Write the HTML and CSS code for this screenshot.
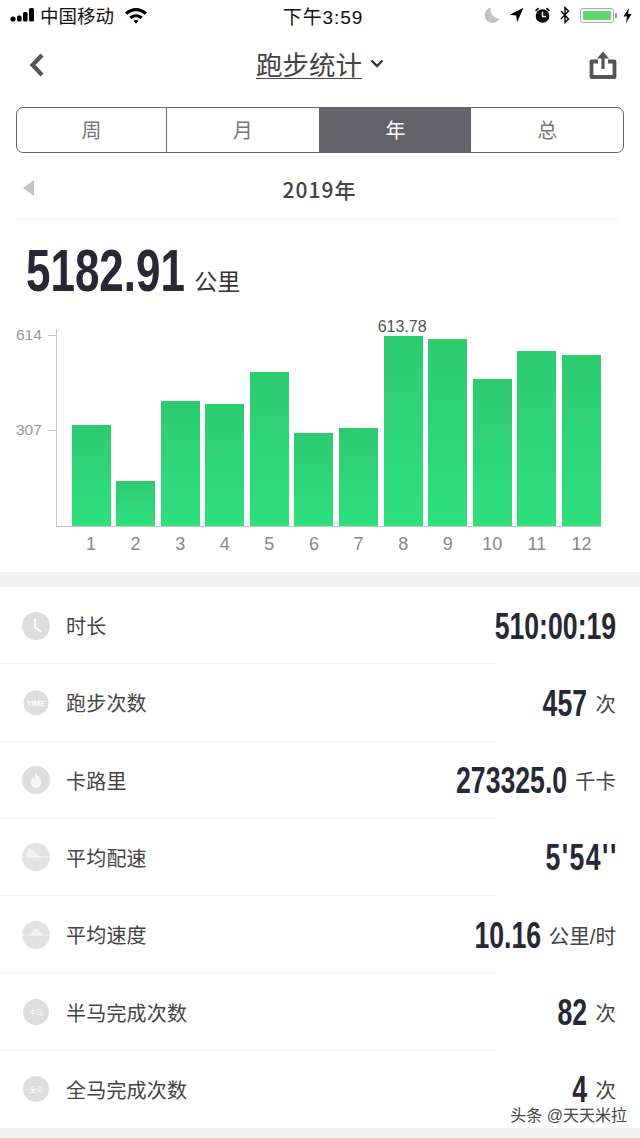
FILE: index.html
```html
<!DOCTYPE html>
<html lang="zh-CN">
<head>
    <meta charset="UTF-8">
    <meta name="viewport" content="width=device-width, initial-scale=1.0">
    <title>跑步统计</title>
    <link rel="stylesheet" href="styles.css">
</head>
<body>
    <div class="page">
        <div class="status-bar">
            <div class="status-left">
                <svg class="signal" width="26" height="16" viewBox="0 0 26 16"><circle cx="3" cy="12" r="2.6"/><rect x="7" y="8.5" width="4.6" height="6" rx="1.6"/><rect x="13" y="5" width="4.6" height="9.6" rx="1.6"/><rect x="19" y="1" width="5" height="13.6" rx="1.6"/></svg>
                <span>中国移动</span>
                <svg class="wifi" width="24" height="17" viewBox="0 0 24 17"><path d="M1 5.6C7.5-.4 16.500-.4 23 5.600l-2.100 2.200C15.700 3 8.300 3 3.100 7.800z"/><path d="M5.200 9.800c4-3.500 9.600-3.500 13.600 0l-2.200 2.200c-2.800-2.300-6.400-2.300-9.200 0z"/><path d="M9.300 13.800c1.600-1.200 3.800-1.200 5.400 0L12 16.600z"/></svg>
            </div>
            <div class="status-time">下午3:59</div>
            <div class="status-right">
                <svg class="icon-moon" width="16" height="18" viewBox="0 0 16 18"><path d="M7 1.500a7.800 7.800 0 1 0 8.500 11A8.500 8.500 0 0 1 7 1.500z" fill="#c2c2c2"/></svg>
                <svg class="icon-arrow" width="15" height="16" viewBox="0 0 15 16"><path d="M14.500.8L.8 7.800l6.400.6.900 6.800z"/></svg>
                <svg class="icon-alarm" width="17" height="18" viewBox="0 0 17 18"><circle cx="8.500" cy="10" r="6.800"/><path d="M1 4.200L4 1.500 5.200 2.700 2.200 5.400zM16 4.200L13 1.500 11.800 2.700 14.800 5.400z"/><path d="M8.500 5.500V10.500H12" fill="none" stroke="#fff" stroke-width="1.400"/></svg>
                <svg width="10" height="18" viewBox="0 0 10 18"><path d="M1 5l7.500 8L5 16.500V1.500L8.500 5 1 13" fill="none" stroke="#000" stroke-width="1.400"/></svg>
                <div class="battery"><div class="battery-fill"></div></div>
                <div class="battery-cap"></div>
                <svg width="9" height="15" viewBox="0 0 9 15"><path d="M6 0L.5 8.500H4L3 15l5.500-9H5z"/></svg>
            </div>
        </div>

        <div class="nav">
            <svg class="nav-back" width="18" height="26" viewBox="0 0 18 26"><path d="M14 3L4.500 13 14 23" fill="none" stroke="#555" stroke-width="4.200"/></svg>
            <div class="nav-title"><span class="nav-title-text">跑步统计</span>
                <svg width="14" height="9" viewBox="0 0 14 9"><path d="M1.500 1.500L7 7l5.500-5.500" fill="none" stroke="#333" stroke-width="2.400"/></svg>
            </div>
            <svg class="nav-share" width="28" height="30" viewBox="0 0 28 30"><path d="M9 11.500H2.500v15.500h23V11.500H19" fill="none" stroke="#555" stroke-width="3.800" stroke-linejoin="round"/><path d="M14 19V4" stroke="#555" stroke-width="3.200"/><path d="M8 8.500L14 1.500 20 8.500z" fill="#555"/></svg>
        </div>

        <div class="tabs">
            <div class="tab">周</div>
            <div class="tab">月</div>
            <div class="tab tab-active">年</div>
            <div class="tab">总</div>
        </div>

        <div class="year-row">
            <div class="year-prev"></div>
            <div class="year-label">2019年</div>
        </div>

        <div class="total">
            <span class="num num-big">5182.91</span>
            <span class="total-unit">公里</span>
        </div>

        <div class="chart">
            <div class="tick tick-top">614</div>
            <div class="tick tick-mid">307</div>
            <div class="bars">
                <div class="bar" style="height: 101px"></div>
                <div class="bar" style="height: 45px"></div>
                <div class="bar" style="height: 125px"></div>
                <div class="bar" style="height: 122px"></div>
                <div class="bar" style="height: 154px"></div>
                <div class="bar" style="height: 93px"></div>
                <div class="bar" style="height: 98px"></div>
                <div class="bar" style="height: 190px"><span class="bar-value">613.78</span></div>
                <div class="bar" style="height: 187px"></div>
                <div class="bar" style="height: 147px"></div>
                <div class="bar" style="height: 175px"></div>
                <div class="bar" style="height: 171px"></div>
            </div>
            <div class="months">
                <span>1</span><span>2</span><span>3</span><span>4</span><span>5</span><span>6</span>
                <span>7</span><span>8</span><span>9</span><span>10</span><span>11</span><span>12</span>
            </div>
        </div>

        <div class="band"></div>

        <div class="rows">
            <div class="row">
                <svg class="row-icon" width="28" height="28" viewBox="0 0 28 28"><circle cx="14" cy="14" r="14" fill="#dedede"/><path d="M13 7v8l6 5" fill="none" stroke="#fff" stroke-width="2"/></svg>
                <div class="row-label">时长</div>
                <div class="row-value"><span class="num">510:00:19</span></div>
            </div>
            <div class="row">
                <svg class="row-icon" width="28" height="28" viewBox="0 0 28 28"><circle cx="14" cy="14" r="12.500" fill="#dedede"/><text x="14" y="17" class="icon-text icon-text-bold">TIME</text></svg>
                <div class="row-label">跑步次数</div>
                <div class="row-value"><span class="num">457</span><span class="unit">次</span></div>
            </div>
            <div class="row">
                <svg class="row-icon" width="28" height="28" viewBox="0 0 28 28"><circle cx="14" cy="14" r="14" fill="#dedede"/><path d="M14 6c1 3.500 5.500 5.500 5.500 10.500a5.500 5.500 0 0 1-11 0c0-2.500 1.200-4 2.500-5.200.2 1.700.8 2.400 1.500 2.500C13 11 12.500 9 14 6z" fill="#f4f4f4"/></svg>
                <div class="row-label">卡路里</div>
                <div class="row-value"><span class="num">273325.0</span><span class="unit">千卡</span></div>
            </div>
            <div class="row">
                <svg class="row-icon" width="28" height="28" viewBox="0 0 28 28"><circle cx="14" cy="14" r="14" fill="#e2e2e2"/><path d="M7 5l5 3 6 6H4z" fill="#f1f1f1"/><path d="M0 14h28" stroke="#fff" stroke-width="1" stroke-dasharray="2 1"/></svg>
                <div class="row-label">平均配速</div>
                <div class="row-value"><span class="num num-pace">5'54''</span></div>
            </div>
            <div class="row">
                <svg class="row-icon" width="28" height="28" viewBox="0 0 28 28"><circle cx="14" cy="14" r="14" fill="#e2e2e2"/><path d="M7 14l7-7 7 7z" fill="#f1f1f1"/><path d="M0 14h28" stroke="#fff" stroke-width="1" stroke-dasharray="2 1"/></svg>
                <div class="row-label">平均速度</div>
                <div class="row-value"><span class="num">10.16</span><span class="unit">公里/时</span></div>
            </div>
            <div class="row">
                <svg class="row-icon" width="28" height="28" viewBox="0 0 28 28"><circle cx="14" cy="14" r="13" fill="#dedede"/><text x="14" y="17" class="icon-text">半马</text></svg>
                <div class="row-label">半马完成次数</div>
                <div class="row-value"><span class="num">82</span><span class="unit">次</span></div>
            </div>
            <div class="row">
                <svg class="row-icon" width="28" height="28" viewBox="0 0 28 28"><circle cx="14" cy="14" r="13" fill="#dedede"/><text x="14" y="17" class="icon-text">全马</text></svg>
                <div class="row-label">全马完成次数</div>
                <div class="row-value"><span class="num">4</span><span class="unit">次</span></div>
            </div>
        </div>

        <div class="band-bottom"></div>
        <div class="watermark">头条 @天天米拉</div>
    </div>
</body>
</html>
```

FILE: styles.css
```css
body {
    margin: 0;
    background-color: #fff;
    font-family: "Liberation Sans", "Noto Sans CJK SC", sans-serif;
    color: #333;
}
.page {
    position: relative;
    width: 640px;
    height: 1138px;
    overflow: hidden;
    display: flex;
    flex-direction: column;
}

/* status bar */
.status-bar {
    height: 33px;
    padding: 0 8px 3px 10px;
    box-sizing: border-box;
    display: flex;
    align-items: center;
    position: relative;
    color: #111;
}
.status-left {
    display: flex;
    align-items: center;
    gap: 4px;
    font-size: 18.500px;
}
.wifi {
    margin-left: 6px;
}
.status-time {
    position: absolute;
    left: 0;
    right: 0;
    text-align: center;
    font-size: 19px;
    letter-spacing: 0.9px;
    padding-left: 6px;
}
.status-right {
    margin-left: auto;
    display: flex;
    align-items: center;
    gap: 6px;
}
.icon-moon {
    margin-right: 3px;
}
.icon-arrow {
    margin-right: 4px;
}
.icon-alarm {
    margin-right: 3px;
}
.battery {
    width: 34px;
    height: 15px;
    padding: 2px;
    margin-left: 4px;
    border: 1px solid #aaa;
    border-radius: 3px;
    box-sizing: border-box;
    display: flex;
}
.battery-fill {
    flex: 1;
    background-color: #5cd86f;
    border-radius: 1px;
}
.battery-cap {
    width: 2px;
    height: 5px;
    margin-left: -5px;
    background-color: #999;
}

/* nav */
.nav {
    height: 64px;
    position: relative;
    display: flex;
    align-items: center;
    justify-content: center;
}
.nav-back {
    position: absolute;
    left: 28px;
    top: 19px;
}
.nav-share {
    position: absolute;
    right: 23px;
    top: 17px;
}
.nav-title {
    display: flex;
    align-items: center;
    gap: 8px;
    padding-bottom: 3px;
    font-size: 26.500px;
    color: #444;
}
.nav-title-text {
    text-decoration: underline;
    text-decoration-thickness: 1px;
    text-underline-offset: 3px;
}

/* tabs */
.tabs {
    margin: 10px 16px 0;
    height: 46px;
    display: flex;
    border: 1.500px solid #666;
    border-radius: 7px;
    box-sizing: border-box;
    overflow: hidden;
}
.tab {
    flex: 1;
    display: flex;
    align-items: center;
    justify-content: center;
    padding-bottom: 2px;
    font-size: 20px;
    color: #777;
    border-right: 1px solid #666;
}
.tab:first-child {
    flex: none;
    width: 149px;
}
.tab:last-child,
.tab-active {
    border-right: none;
}
.tab-active {
    background-color: #636369;
    color: #fff;
}

/* year */
.year-row {
    margin: 0 20px 0 16px;
    height: 67px;
    display: flex;
    align-items: center;
    justify-content: center;
    position: relative;
    border-bottom: 1px solid #f3f3f3;
    box-sizing: border-box;
}
.year-prev {
    position: absolute;
    left: 7px;
    top: 27px;
    border-style: solid;
    border-width: 8px 11px 8px 0;
    border-color: transparent #c4c4c4 transparent transparent;
}
.year-label {
    font-family: "Noto Sans CJK SC", sans-serif;
    font-size: 21px;
    font-weight: 500;
    letter-spacing: 1px;
    line-height: 28px;
    color: #444;
    padding: 0 0 0 3px;
    margin-top: 6px;
}

/* total */
.num {
    display: inline-block;
    font-weight: bold;
    font-size: 36px;
    line-height: 30px;
    color: #272735;
    transform: scaleX(0.74);
    transform-origin: right center;
}
.total {
    height: 102px;
    padding: 0 0 0 26px;
    display: flex;
    align-items: center;
    box-sizing: border-box;
}
.num-big {
    font-size: 59px;
    line-height: 70px;
    transform: scaleX(0.745);
    transform-origin: left center;
    margin-right: -54px;
}
.total-unit {
    font-size: 23px;
    margin-left: 9px;
    margin-top: 18px;
    color: #333;
}

/* chart */
.chart {
    position: relative;
    height: 243px;
    padding-left: 56px;
    margin-top: 7px;
}
.bars {
    height: 198px;
    width: 546px;
    padding-left: 14.500px;
    box-sizing: border-box;
    display: flex;
    align-items: flex-end;
    gap: 5.600px;
    border-left: 1px solid #c8c8c8;
    border-bottom: 1px solid #c8c8c8;
}
.bar {
    position: relative;
    width: 39px;
    flex: none;
    background: linear-gradient(#2ecb70, #2edf7c);
}
.bar-value {
    position: absolute;
    left: -6px;
    top: -18px;
    font-size: 16px;
    line-height: 18px;
    color: #555;
}
.tick {
    position: absolute;
    left: 16px;
    width: 40px;
    font-size: 15.500px;
    line-height: 18px;
    color: #999;
    display: flex;
    align-items: center;
    gap: 6px;
}
.tick::after {
    content: "";
    flex: 1;
    height: 1px;
    background-color: #c8c8c8;
}
.tick-top {
    top: -3px;
}
.tick-mid {
    top: 92px;
}
.months {
    margin-left: 15.500px;
    display: flex;
    gap: 5.600px;
    padding-top: 6px;
    font-size: 18px;
    line-height: 22px;
    color: #888;
}
.months span {
    width: 39px;
    flex: none;
    text-align: center;
}

.band {
    height: 15px;
    background-color: #f0f0f0;
    flex: none;
}

/* data rows */
.rows {
    height: 541px;
    flex: none;
    display: flex;
    flex-direction: column;
}
.row {
    flex: 1;
    position: relative;
    display: flex;
    align-items: center;
    padding: 0 24px 0 22px;
}
.row:not(:last-child)::after {
    content: "";
    position: absolute;
    left: 0;
    bottom: 0;
    width: 495px;
    height: 1px;
    background-color: #f3f3f3;
}
.row-icon {
    flex: none;
}
.row-label {
    margin-left: 16px;
    font-size: 20px;
    letter-spacing: 0.2px;
    color: #444;
}
.row-value {
    margin-left: auto;
    display: flex;
    align-items: center;
}
.row-value .num {
    margin-top: 2px;
}
.row-value .num-pace {
    letter-spacing: 2px;
    margin-right: -2px;
}
.unit {
    margin-left: 8px;
    font-size: 20.500px;
    color: #444;
}
.icon-text {
    font-size: 7px;
    fill: #fff;
    text-anchor: middle;
}
.icon-text-bold {
    font-size: 8px;
    font-weight: bold;
}

.band-bottom {
    flex: 1;
    background-color: #f0f0f0;
}
.watermark {
    position: absolute;
    right: 13px;
    bottom: 13px;
    font-size: 16px;
    line-height: 18px;
    color: #444;
    text-shadow: 0 0 2px #fff, 0 0 2px #fff;
}
```
